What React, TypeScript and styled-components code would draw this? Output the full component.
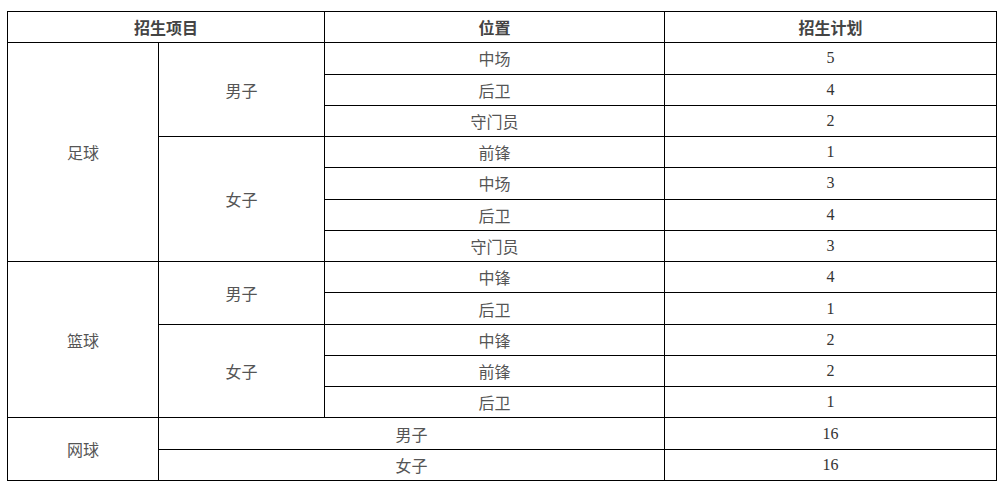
import React from "react";
import styled, { createGlobalStyle } from "styled-components";

const Global = createGlobalStyle`
  html, body { margin: 0; padding: 0; background: #fff; }
`;

const Page = styled.div`
  padding: 11px 0 0 7px;
`;

const Table = styled.table`
  border-collapse: collapse;
  table-layout: fixed;
  width: 989px;
  font-family: "Liberation Serif", "Noto Sans CJK SC", serif;
  font-size: 16px;
  color: #555;
`;

const Col = styled.col<{ $w: number }>`
  width: ${(p) => p.$w}px;
`;

const Th = styled.th`
  border: 1px solid #000;
  height: 30.27px;
  padding: 0;
  text-align: center;
  font-weight: bold;
  color: #444;
`;

const Td = styled.td<{ $num?: boolean }>`
  border: 1px solid #000;
  height: 30.27px;
  padding: 0;
  text-align: center;
  vertical-align: middle;
  color: ${(p) => (p.$num ? "#333" : "#555")};
`;

type Row = { cells: { t: string; rs?: number; cs?: number; num?: boolean }[] };

const widths = [151, 166, 340, 332];

const rows: Row[] = [
  { cells: [{ t: "足球", rs: 7 }, { t: "男子", rs: 3 }, { t: "中场" }, { t: "5", num: true }] },
  { cells: [{ t: "后卫" }, { t: "4", num: true }] },
  { cells: [{ t: "守门员" }, { t: "2", num: true }] },
  { cells: [{ t: "女子", rs: 4 }, { t: "前锋" }, { t: "1", num: true }] },
  { cells: [{ t: "中场" }, { t: "3", num: true }] },
  { cells: [{ t: "后卫" }, { t: "4", num: true }] },
  { cells: [{ t: "守门员" }, { t: "3", num: true }] },
  { cells: [{ t: "篮球", rs: 5 }, { t: "男子", rs: 2 }, { t: "中锋" }, { t: "4", num: true }] },
  { cells: [{ t: "后卫" }, { t: "1", num: true }] },
  { cells: [{ t: "女子", rs: 3 }, { t: "中锋" }, { t: "2", num: true }] },
  { cells: [{ t: "前锋" }, { t: "2", num: true }] },
  { cells: [{ t: "后卫" }, { t: "1", num: true }] },
  { cells: [{ t: "网球", rs: 2 }, { t: "男子", cs: 2 }, { t: "16", num: true }] },
  { cells: [{ t: "女子", cs: 2 }, { t: "16", num: true }] },
];

export default function App() {
  return (
    <Page>
      <Global />
      <Table>
        <colgroup>
          {widths.map((w, i) => (
            <Col key={i} $w={w} />
          ))}
        </colgroup>
        <thead>
          <tr>
            <Th colSpan={2}>招生项目</Th>
            <Th>位置</Th>
            <Th>招生计划</Th>
          </tr>
        </thead>
        <tbody>
          {rows.map((r, i) => (
            <tr key={i}>
              {r.cells.map((c, j) => (
                <Td key={j} rowSpan={c.rs} colSpan={c.cs} $num={c.num}>
                  {c.t}
                </Td>
              ))}
            </tr>
          ))}
        </tbody>
      </Table>
    </Page>
  );
}
